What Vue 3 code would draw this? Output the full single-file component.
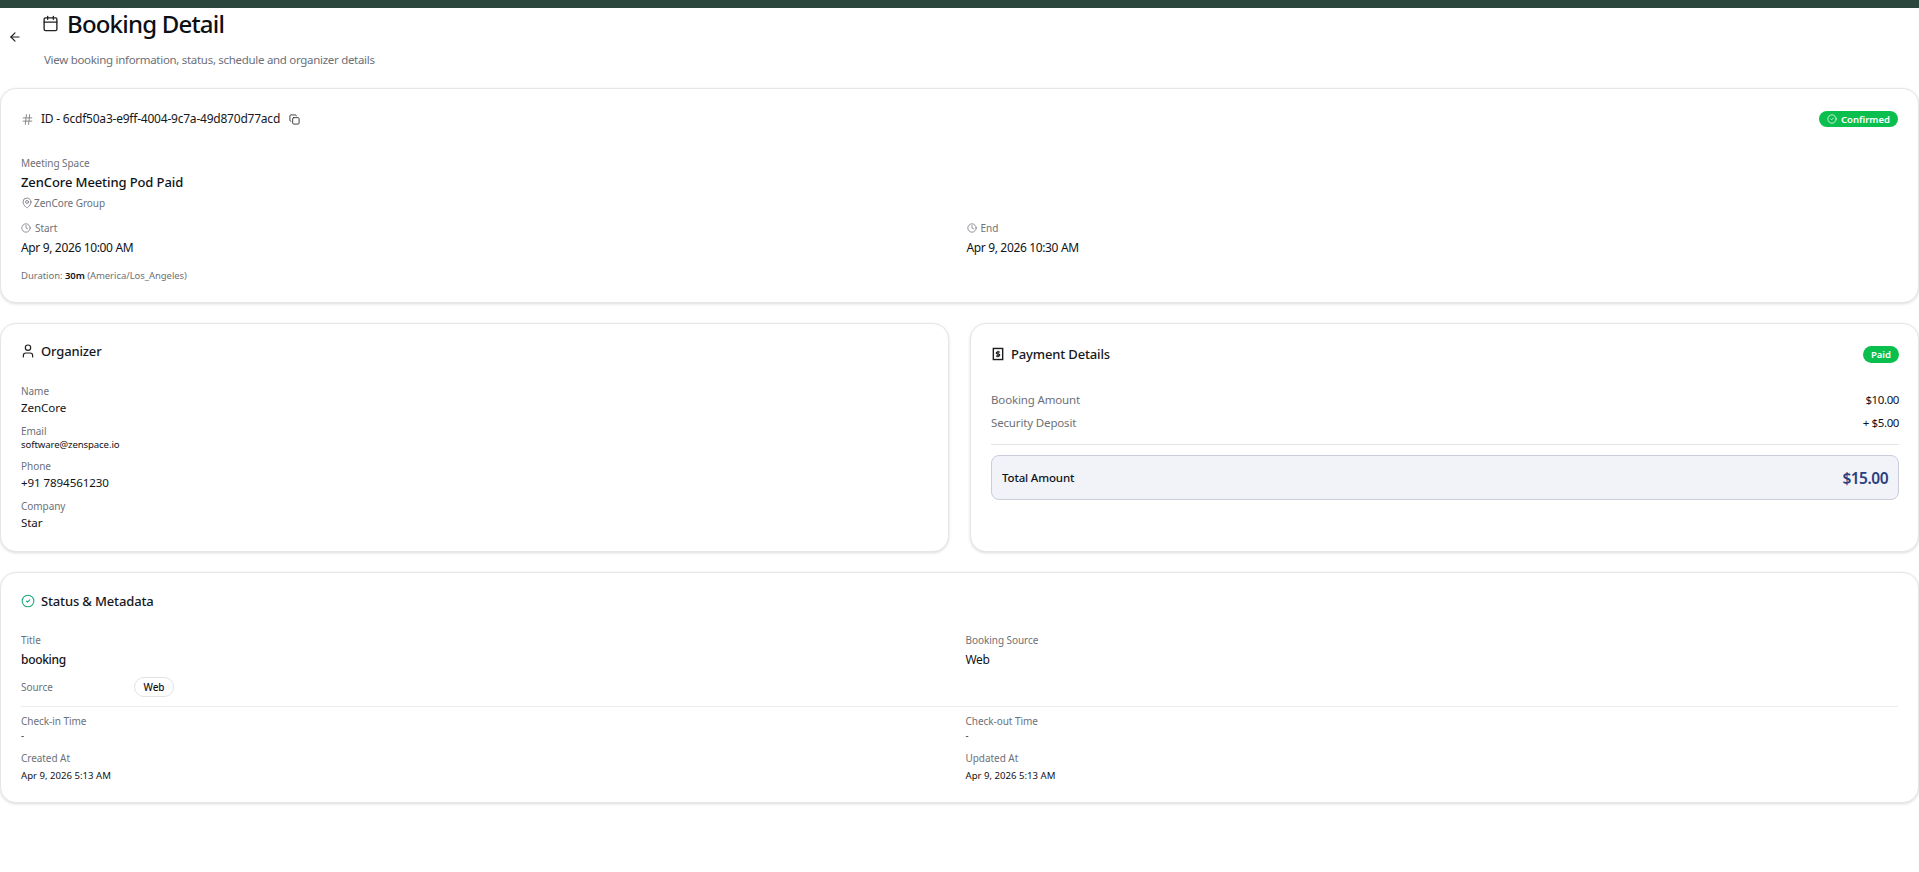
<script setup>
const organizer = [
  { label: 'Name', value: 'ZenCore', cls: 'v-md' },
  { label: 'Email', value: 'software@zenspace.io', cls: 'v-sm' },
  { label: 'Phone', value: '+91 7894561230', cls: 'v-md' },
  { label: 'Company', value: 'Star', cls: 'v-md' }
]
</script>

<template>
  <div class="page">
    <div class="topbar"></div>
    <header class="header">
      <svg class="back" viewBox="0 0 24 24"><path d="m12 19-7-7 7-7" /><path d="M19 12H5" /></svg>
      <div class="header-main">
        <div class="title-row">
          <svg class="cal" viewBox="0 0 24 24"><rect x="3" y="4" width="18" height="18" rx="2" /><path d="M16 2v4M8 2v4M3 10h18" /></svg>
          <h1>Booking Detail</h1>
        </div>
        <p class="subtitle">View booking information, status, schedule and organizer details</p>
      </div>
    </header>

    <section class="card card-booking">
      <div class="head-row">
        <div class="head-left">
          <svg class="ic-hash" viewBox="0 0 24 24"><path d="M4 9h16M4 15h16M10 3 8 21M16 3l-2 18" /></svg>
          <span class="id-text">ID - 6cdf50a3-e9ff-4004-9c7a-49d870d77acd</span>
          <svg class="ic-copy" viewBox="0 0 24 24"><rect x="8" y="8" width="14" height="14" rx="2" /><path d="M4 16c-1.1 0-2-.9-2-2V4c0-1.1.9-2 2-2h10c1.1 0 2 .9 2 2" /></svg>
        </div>
        <span class="badge">
          <svg class="ic-badge" viewBox="0 0 24 24"><circle cx="12" cy="12" r="10" /><path d="m9 12 2 2 4-4" /></svg>
          Confirmed
        </span>
      </div>

      <div class="label space-label">Meeting Space</div>
      <div class="space-name">ZenCore Meeting Pod Paid</div>
      <div class="label location">
        <svg class="ic-pin" viewBox="0 0 24 24"><path d="M20 10c0 6-8 12-8 12s-8-6-8-12a8 8 0 0 1 16 0Z" /><circle cx="12" cy="10" r="3" /></svg>
        ZenCore Group
      </div>

      <div class="two-col schedule">
        <div>
          <div class="label with-icon">
            <svg class="ic-sm" viewBox="0 0 24 24"><circle cx="12" cy="12" r="10" /><path d="M12 6v6l4 2" /></svg>
            Start
          </div>
          <div class="date">Apr 9, 2026 10:00 AM</div>
        </div>
        <div>
          <div class="label with-icon">
            <svg class="ic-sm" viewBox="0 0 24 24"><circle cx="12" cy="12" r="10" /><path d="M12 6v6l4 2" /></svg>
            End
          </div>
          <div class="date">Apr 9, 2026 10:30 AM</div>
        </div>
      </div>

      <div class="label duration">Duration: <b>30m</b> (America/Los_Angeles)</div>
    </section>

    <div class="split">
      <section class="card card-org">
        <div class="section-head">
          <svg class="ic-head" viewBox="3.5 1.5 17 21"><path d="M19 21v-2a4 4 0 0 0-4-4H9a4 4 0 0 0-4 4v2" /><circle cx="12" cy="7" r="4" /></svg>
          <h2>Organizer</h2>
        </div>
        <div class="org-list">
          <div v-for="item in organizer" :key="item.label" class="org-item">
            <div class="label">{{ item.label }}</div>
            <div :class="item.cls">{{ item.value }}</div>
          </div>
        </div>
      </section>

      <section class="card card-pay">
        <div class="pay-head">
          <div class="section-head">
            <svg class="ic-head ic-receipt" viewBox="0 0 24 24"><rect x="4" y="2.5" width="16" height="19" /><path class="dollar" d="M15.5 8.5h-4.75a1.75 1.75 0 0 0 0 3.5h2.5a1.75 1.75 0 0 1 0 3.5H8.5M12 6.5v11" /></svg>
            <h2>Payment Details</h2>
          </div>
          <span class="badge badge-paid">Paid</span>
        </div>
        <div class="pay-row first"><span>Booking Amount</span><b>$10.00</b></div>
        <div class="pay-row"><span>Security Deposit</span><b>+ $5.00</b></div>
        <div class="pay-divider"></div>
        <div class="total">
          <span class="total-label">Total Amount</span>
          <span class="total-value">$15.00</span>
        </div>
      </section>
    </div>

    <section class="card card-status">
      <div class="section-head">
        <svg class="ic-head ic-green" viewBox="0 0 24 24"><circle cx="12" cy="12" r="10" /><path d="m9 12 2 2 4-4" /></svg>
        <h2>Status &amp; Metadata</h2>
      </div>
      <div class="two-col status-grid status-top">
        <div>
          <div class="label">Title</div>
          <div class="v-lg">booking</div>
          <div class="source-row">
            <span class="label source-label">Source</span>
            <span class="chip">Web</span>
          </div>
        </div>
        <div>
          <div class="label">Booking Source</div>
          <div class="v-lg v-regular">Web</div>
        </div>
      </div>
      <div class="status-divider"></div>
      <div class="two-col status-grid">
        <div>
          <div class="label">Check-in Time</div>
          <div class="v-xs dash">-</div>
          <div class="label created-label">Created At</div>
          <div class="v-xs stamp">Apr 9, 2026 5:13 AM</div>
        </div>
        <div>
          <div class="label">Check-out Time</div>
          <div class="v-xs dash">-</div>
          <div class="label created-label">Updated At</div>
          <div class="v-xs stamp">Apr 9, 2026 5:13 AM</div>
        </div>
      </div>
    </section>
  </div>
</template>

<style scoped>
.page {
  width: 1919px;
  height: 872px;
  overflow: hidden;
  background: #fff;
  color: #111318;
  font-family: "Noto Sans", "Open Sans", sans-serif;
}
svg {
  fill: none;
  stroke: currentColor;
  stroke-width: 2;
  stroke-linecap: round;
  stroke-linejoin: round;
  flex: none;
  display: block;
}
.topbar {
  height: 8px;
  background: #2b463c;
}
.header {
  height: 80px;
  display: flex;
  align-items: flex-start;
  padding-left: 8px;
}
.back {
  width: 14px;
  height: 14px;
  margin-top: 22px;
  color: #1a1a1a;
  stroke-width: 1.9;
}
.header-main {
  margin-left: 22px;
}
.title-row {
  display: flex;
  align-items: center;
  height: 32px;
  gap: 8px;
}
.cal {
  width: 17px;
  height: 17px;
  margin-left: -2px;
  margin-top: -1px;
  color: #222;
  stroke-width: 1.9;
}
h1 {
  margin: 0;
  font-size: 24px;
  font-weight: 500;
  line-height: 30px;
  letter-spacing: -0.8px;
  color: #0d0f14;
}
.subtitle {
  margin: 12px 0 0;
  font-size: 11.5px;
  line-height: 16px;
  letter-spacing: -0.3px;
  color: #6b7079;
}
.card {
  box-sizing: border-box;
  background: #fff;
  border: 1px solid #e6e6e6;
  border-radius: 16px;
  box-shadow: 0 1px 3px rgba(0, 0, 0, 0.14);
  padding: 0 20px;
}
.label {
  font-size: 10px;
  line-height: 14px;
  letter-spacing: -0.05px;
  color: #6d7178;
}
.card-booking {
  height: 215px;
  padding-top: 15px;
}
.head-row {
  height: 30px;
  display: flex;
  align-items: center;
  justify-content: space-between;
}
.head-left {
  display: flex;
  align-items: center;
}
.ic-hash {
  width: 13px;
  height: 13px;
  color: #858585;
  stroke-width: 1.8;
}
.id-text {
  margin-left: 7px;
  font-size: 12px;
  line-height: 20px;
  letter-spacing: -0.22px;
  color: #16181d;
}
.ic-copy {
  width: 11px;
  height: 11px;
  margin-left: 9px;
  color: #333;
}
.badge {
  display: inline-flex;
  align-items: center;
  justify-content: center;
  gap: 4px;
  height: 16px;
  box-sizing: border-box;
  padding: 0 8px;
  border-radius: 999px;
  background: #0bbf4f;
  color: #fff;
  font-size: 9.5px;
  font-weight: 600;
}
.ic-badge {
  width: 10px;
  height: 10px;
  stroke-width: 1.8;
}
.space-label {
  margin-top: 22px;
}
.space-name {
  margin-top: 2px;
  font-size: 13px;
  line-height: 20px;
  letter-spacing: -0.1px;
  font-weight: 500;
}
.location {
  margin-top: 4px;
  display: flex;
  align-items: center;
  gap: 1px;
}
.ic-pin {
  width: 12px;
  height: 12px;
  color: #6d7178;
  stroke-width: 1.6;
}
.ic-sm {
  width: 10px;
  height: 10px;
  color: #6d7178;
  stroke-width: 1.8;
}
.two-col {
  display: grid;
  grid-template-columns: 1fr 1fr;
  column-gap: 14px;
}
.status-grid {
  column-gap: 12px;
}
.schedule {
  margin-top: 11px;
}
.with-icon {
  display: flex;
  align-items: center;
  gap: 4px;
}
.date {
  margin-top: 3px;
  font-size: 12px;
  line-height: 20px;
  letter-spacing: -0.35px;
}
.duration {
  margin-top: 11px;
  font-size: 9.5px;
}
.duration b {
  font-weight: 600;
  color: #111318;
}
.split {
  display: grid;
  grid-template-columns: 1fr 1fr;
  column-gap: 21px;
  margin-top: 20px;
}
.card-org,
.card-pay {
  height: 229px;
}
.card-org {
  padding-top: 15px;
}
.card-status {
  padding-top: 16px;
}
.card-pay {
  padding: 18px 19px 0 20px;
}
.section-head {
  display: flex;
  align-items: center;
  height: 24px;
  gap: 6px;
}
.ic-head {
  width: 14px;
  height: 14px;
  color: #222;
  stroke-width: 1.8;
}
.ic-green {
  color: #17a77a;
}
.ic-receipt {
  stroke-width: 2.4;
  stroke-linecap: butt;
  stroke-linejoin: miter;
  color: #1c1c1c;
}
.dollar {
  stroke-width: 2;
}
h2 {
  margin: 0;
  font-size: 13px;
  line-height: 20px;
  letter-spacing: -0.15px;
  font-weight: 500;
  color: #16181d;
}
.org-list {
  margin-top: 21px;
}
.org-item + .org-item {
  margin-top: 7px;
}
.v-md {
  margin-top: 1px;
  font-size: 11.6px;
  line-height: 18px;
  letter-spacing: -0.1px;
  color: #111318;
}
.v-sm {
  margin-bottom: 2px;
  font-size: 9.6px;
  line-height: 14px;
  letter-spacing: -0.1px;
  color: #111318;
}
.pay-head {
  display: flex;
  align-items: center;
  justify-content: space-between;
}
.badge-paid {
  padding: 0;
  width: 36px;
  height: 17px;
}
.pay-row {
  display: flex;
  justify-content: space-between;
  align-items: center;
  height: 18px;
  margin-top: 5px;
  font-size: 11.5px;
  letter-spacing: -0.15px;
  color: #6d7178;
}
.pay-row.first {
  margin-top: 24px;
}
.pay-row b {
  font-weight: 400;
  letter-spacing: -0.4px;
  color: #111318;
}
.pay-divider {
  height: 1px;
  background: #e2e3e6;
  margin: 13px 0 10px;
}
.total {
  box-sizing: border-box;
  height: 45px;
  display: flex;
  align-items: center;
  justify-content: space-between;
  padding: 0 10px;
  background: #f2f3f8;
  border: 1px solid #c9ccdb;
  border-radius: 8px;
}
.total-label {
  font-size: 11.5px;
  letter-spacing: -0.15px;
  font-weight: 500;
}
.total-value {
  font-size: 15.5px;
  letter-spacing: -0.5px;
  font-weight: 600;
  color: #2b3f80;
}
.card-status {
  height: 231px;
  margin-top: 20px;
}
.status-top {
  margin-top: 20px;
}
.v-lg {
  margin-top: 3px;
  font-size: 12px;
  line-height: 20px;
  letter-spacing: -0.3px;
  font-weight: 500;
}
.v-regular {
  font-weight: 400;
}
.source-row {
  display: flex;
  align-items: center;
  height: 20px;
  margin-top: 7px;
}
.source-label {
  width: 113px;
}
.chip {
  box-sizing: border-box;
  display: inline-flex;
  align-items: center;
  justify-content: center;
  width: 40px;
  height: 20px;
  border: 1px solid #e2e2e2;
  border-radius: 999px;
  font-size: 10px;
  font-weight: 500;
}
.status-divider {
  height: 1px;
  background: #ececec;
  margin: 9px 0 7px;
}
.v-xs {
  font-size: 9.6px;
  line-height: 14px;
  color: #111318;
}
.dash {
  margin-top: 1px;
}
.stamp {
  margin-top: 4px;
}
.created-label {
  margin-top: 8px;
}
</style>
